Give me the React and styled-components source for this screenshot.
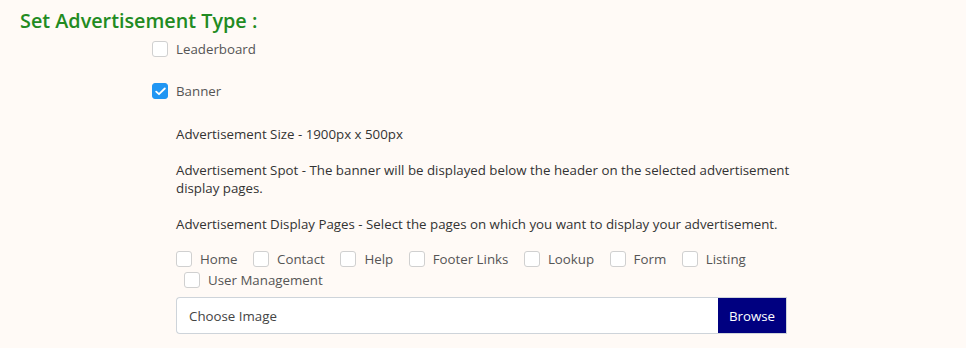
import React, { useState } from "react";
import styled, { createGlobalStyle } from "styled-components";

const GlobalStyle = createGlobalStyle`
  body {
    margin: 0;
    background: #fffaf6;
    font-family: "Open Sans", "Noto Sans", sans-serif;
  }
`;

const Page = styled.div`
  padding: 8px 20px 0;
`;

const Heading = styled.h2`
  margin: 0;
  font-size: 19.8px;
  font-weight: 600;
  color: #228b22;
  line-height: 26px;
`;

const Options = styled.div`
  padding-left: 132px;
  display: flex;
  flex-direction: column;
`;

const Option = styled.label`
  display: flex;
  align-items: center;
  gap: 8px;
  height: 24px;
  margin-top: ${(p) => p.$top || 0}px;
  font-size: 13.3px;
  color: #555;
  cursor: pointer;
`;

const Box = styled.span`
  width: 16px;
  height: 16px;
  box-sizing: border-box;
  border-radius: 3px;
  border: 1px solid ${(p) => (p.$checked ? "#2196f3" : "#d0d0d0")};
  background: ${(p) => (p.$checked ? "#2196f3" : "#fff")};
  display: flex;
  align-items: center;
  justify-content: center;
  flex-shrink: 0;
`;

const Details = styled.div`
  padding-left: 24px;
  margin-top: 22px;
  width: 620px;
`;

const Text = styled.p`
  margin: 0 0 ${(p) => p.$bottom || 18}px;
  font-size: 13.3px;
  line-height: 18px;
  color: #333;
`;

const PageList = styled.div`
  display: flex;
  flex-wrap: wrap;
  width: 600px;
  column-gap: 15.5px;
  margin-top: -4px;
`;

const PageItem = styled(Option)`
  height: 21px;
  margin-left: ${(p) => (p.$indent ? 8 : 0)}px;
`;

const FileRow = styled.div`
  display: flex;
  width: 611px;
  height: 37px;
  margin-top: 7px;
`;

const FileInput = styled.div`
  flex: 1;
  display: flex;
  align-items: center;
  padding: 0 12px;
  background: #fff;
  border: 1px solid #ced4da;
  border-right: none;
  border-radius: 4px 0 0 4px;
  font-size: 13.3px;
  color: #444;
`;

const Browse = styled.button`
  width: 69px;
  border: 1px solid #ced4da;
  border-left: none;
  background: #000080;
  color: #fff;
  font-family: inherit;
  font-size: 13.3px;
  padding: 0;
`;

const Check = ({ checked }) => (
  <Box $checked={checked}>
    {checked && (
      <svg width="11" height="9" viewBox="0 0 11 9">
        <path d="M1.2 4.6 L4 7.2 L9.8 1.5" fill="none" stroke="#fff" strokeWidth="1.8" strokeLinecap="round" strokeLinejoin="round" />
      </svg>
    )}
  </Box>
);

const pages = ["Home", "Contact", "Help", "Footer Links", "Lookup", "Form", "Listing", "User Management"];

export default function App() {
  const [type, setType] = useState("Banner");
  const [selected, setSelected] = useState([]);
  const toggle = (p) =>
    setSelected((s) => (s.includes(p) ? s.filter((x) => x !== p) : [...s, p]));

  return (
    <Page>
      <GlobalStyle />
      <Heading>Set Advertisement Type :</Heading>
      <Options>
        <Option $top={3} onClick={() => setType("Leaderboard")}>
          <Check checked={type === "Leaderboard"} />
          Leaderboard
        </Option>
        <Option $top={18} onClick={() => setType("Banner")}>
          <Check checked={type === "Banner"} />
          Banner
        </Option>
        <Details>
          <Text>Advertisement Size - 1900px x 500px</Text>
          <Text>
            Advertisement Spot - The banner will be displayed below the header on the selected
            advertisement display pages.
          </Text>
          <Text $bottom={19}>
            Advertisement Display Pages - Select the pages on which you want to display your
            advertisement.
          </Text>
          <PageList>
            {pages.map((p, i) => (
              <PageItem key={p} $indent={i === 7} onClick={() => toggle(p)}>
                <Check checked={selected.includes(p)} />
                {p}
              </PageItem>
            ))}
          </PageList>
          <FileRow>
            <FileInput>Choose Image</FileInput>
            <Browse>Browse</Browse>
          </FileRow>
        </Details>
      </Options>
    </Page>
  );
}
